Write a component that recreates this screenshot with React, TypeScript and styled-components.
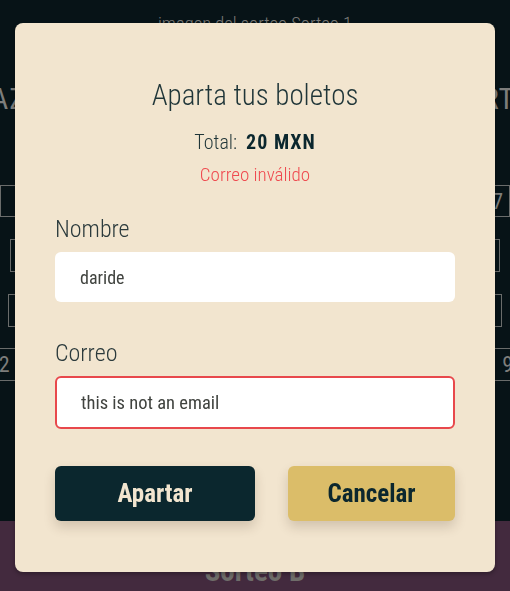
import React from 'react'
import styled, { createGlobalStyle } from 'styled-components'

const GlobalStyle = createGlobalStyle`
    html, body {
        margin: 0;
        padding: 0;
        background: #071317;
        font-family: "Liberation Sans Narrow", "Roboto Condensed", Roboto, sans-serif;
    }
    * {
        box-sizing: border-box;
    }
`

const FONT = `"Liberation Sans Narrow", "Roboto Condensed", Roboto, sans-serif`

const Page = styled.div`
    width: 510px;
    height: 591px;
    overflow: hidden;
    display: flex;
    flex-direction: column;
    background: #071317;
`

const TopSection = styled.div`
    height: 521px;
    display: flex;
    flex-direction: column;
    align-items: center;
    padding-top: 13px;
`

const ImageCaption = styled.div`
    font-size: 18.5px;
    color: #7a7a78;
    font-weight: 300;
`

const BigWord = styled.div`
    display: flex;
    justify-content: space-between;
    margin-top: 46px;
    padding: 0 4px 0 0;
    font-size: 30px;
    color: #7d7d7b;
    letter-spacing: 1px;
    margin-left: -14px;
    margin-right: -14px;
    width: calc(100% + 18px);
`

const TicketGrid = styled.div`
    width: 100%;
    display: flex;
    flex-direction: column;
    margin-top: 69px;
    gap: 22px;
`

const TicketRow = styled.div<{ $inset: number }>`
    display: flex;
    justify-content: space-between;
    padding: 0 ${({ $inset }) => $inset}px;
`

const Ticket = styled.div<{ $h: number }>`
    width: 60px;
    height: ${({ $h }) => $h}px;
    border: 1.5px solid #6a6c6b;
    color: #7d7d7b;
    font-size: 22px;
    display: flex;
    align-items: center;
    justify-content: flex-end;
    padding-right: 6px;
`

const LineRow = styled.div`
    width: 100%;
    height: 33px;
    border-top: 1.5px solid #6a6c6b;
    border-bottom: 1.5px solid #6a6c6b;
    display: flex;
    justify-content: space-between;
    align-items: center;
    font-size: 22px;
    color: #7d7d7b;
    margin-top: 21px;
`

const EdgeNumber = styled.span<{ $side: 'left' | 'right' }>`
    margin-left: ${({ $side }) => ($side === 'left' ? -12 : 0)}px;
    margin-right: ${({ $side }) => ($side === 'right' ? -14 : 0)}px;
`

const BottomSection = styled.div`
    flex: 1;
    background: #432a3e;
    display: flex;
    justify-content: center;
    padding-top: 33px;
`

const SorteoName = styled.div`
    font-size: 29px;
    font-weight: 700;
    color: #6f6d6a;
`

const Overlay = styled.div`
    position: fixed;
    inset: 0;
    display: flex;
    align-items: flex-start;
    justify-content: center;
    padding-top: 23px;
`

const Modal = styled.div`
    width: 480px;
    height: 549px;
    background: #f2e5cf;
    border-radius: 8px;
    box-shadow: 0 2px 4px rgba(0, 0, 0, 0.3);
    padding: 55px 40px 0;
    display: flex;
    flex-direction: column;
    font-family: ${FONT};
`

const Title = styled.h2`
    margin: 0;
    text-align: center;
    font-size: 29px;
    font-weight: 300;
    color: #1f3538;
    line-height: 34px;
`

const Total = styled.div`
    margin-top: 18px;
    text-align: center;
    font-size: 20px;
    line-height: 24px;
    color: #1f3538;
    font-weight: 300;

    strong {
        font-weight: 700;
        color: #0b272e;
        letter-spacing: 1px;
        margin-left: 9px;
    }
`

const ErrorText = styled.div`
    margin-top: 10px;
    text-align: center;
    font-size: 19px;
    line-height: 22px;
    color: #ef4a4f;
    font-weight: 300;
`

const Field = styled.div<{ $top: number }>`
    display: flex;
    flex-direction: column;
    margin-top: ${({ $top }) => $top}px;
`

const Label = styled.label`
    font-size: 24px;
    line-height: 28px;
    color: #2b3a3c;
    font-weight: 300;
    margin-bottom: 9px;
`

const Input = styled.input<{ $invalid?: boolean }>`
    width: 400px;
    height: ${({ $invalid }) => ($invalid ? 53 : 50)}px;
    border-radius: 6px;
    border: ${({ $invalid }) => ($invalid ? '2px solid #e8484c' : 'none')};
    background: #ffffff;
    padding: 0 ${({ $invalid }) => ($invalid ? 24 : 25)}px;
    font-family: ${FONT};
    font-size: ${({ $invalid }) => ($invalid ? 18.5 : 18)}px;
    color: #40433f;
    outline: none;
`

const Actions = styled.div`
    display: flex;
    justify-content: space-between;
    margin-top: 37px;
`

const Button = styled.button<{ $variant: 'primary' | 'secondary' }>`
    width: ${({ $variant }) => ($variant === 'primary' ? 200 : 167)}px;
    height: 55px;
    border: none;
    border-radius: 6px;
    font-family: ${FONT};
    font-size: 25px;
    font-weight: 700;
    background: ${({ $variant }) => ($variant === 'primary' ? '#0b272e' : '#dbbd69')};
    color: ${({ $variant }) => ($variant === 'primary' ? '#f2e5cf' : '#0b272e')};
    box-shadow: 0 6px 12px rgba(60, 40, 20, 0.18);
    cursor: pointer;
`

function App(): JSX.Element {
    return (
        <>
            <GlobalStyle />
            <Page>
                <TopSection>
                    <ImageCaption>imagen del sorteo Sorteo 1</ImageCaption>
                    <BigWord>
                        <span>AZ</span>
                        <span>RT</span>
                    </BigWord>
                    <TicketGrid>
                        <TicketRow $inset={0}>
                            <Ticket $h={32} />
                            <Ticket $h={32}>7</Ticket>
                        </TicketRow>
                        <TicketRow $inset={10}>
                            <Ticket $h={33} />
                            <Ticket $h={33} />
                        </TicketRow>
                        <TicketRow $inset={8}>
                            <Ticket $h={33} />
                            <Ticket $h={33} />
                        </TicketRow>
                    </TicketGrid>
                    <LineRow>
                        <EdgeNumber $side="left">12</EdgeNumber>
                        <EdgeNumber $side="right">94</EdgeNumber>
                    </LineRow>
                </TopSection>
                <BottomSection>
                    <SorteoName>Sorteo B</SorteoName>
                </BottomSection>
            </Page>
            <Overlay>
                <Modal>
                    <Title>Aparta tus boletos</Title>
                    <Total>
                        Total:<strong>20 MXN</strong>
                    </Total>
                    <ErrorText>Correo inválido</ErrorText>
                    <Field $top={29}>
                        <Label>Nombre</Label>
                        <Input defaultValue="daride" />
                    </Field>
                    <Field $top={37}>
                        <Label>Correo</Label>
                        <Input $invalid defaultValue="this is not an email" />
                    </Field>
                    <Actions>
                        <Button $variant="primary">Apartar</Button>
                        <Button $variant="secondary">Cancelar</Button>
                    </Actions>
                </Modal>
            </Overlay>
        </>
    )
}

export default App
